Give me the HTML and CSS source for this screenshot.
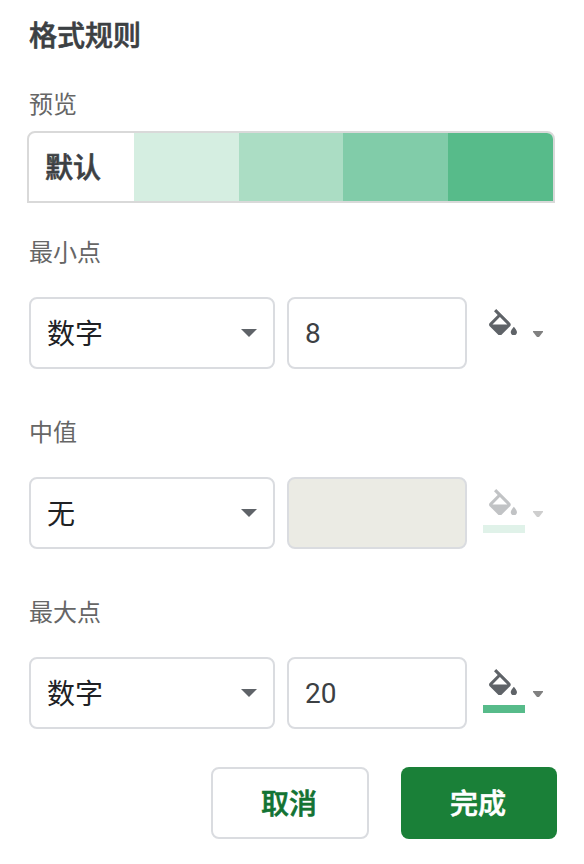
FILE: index.html
```html
<!DOCTYPE html>
<html lang="zh-CN">
<head>
<meta charset="utf-8">
<title>格式规则</title>
<link rel="stylesheet" href="styles.css">
</head>
<body>
<svg class="defs" width="0" height="0" aria-hidden="true">
  <symbol id="fill" viewBox="3 0 18 17"><path d="M16.56 8.94L7.62 0 6.21 1.41l2.38 2.38-5.15 5.15c-.59.59-.59 1.54 0 2.12l5.5 5.5c.29.29.68.44 1.06.44s.77-.15 1.06-.44l5.5-5.5c.59-.58.59-1.53 0-2.12zM5.21 10L10 5.21 14.79 10H5.21zM19 11.5s-2 2.17-2 3.5c0 1.1.9 2 2 2s2-.9 2-2c0-1.33-2-3.5-2-3.5z"/></symbol>
  <symbol id="caret" viewBox="0 0 16 8"><path d="M0 0h16l-8 8z"/></symbol>
  <symbol id="caret-small" viewBox="0 0 10 6"><path d="M0 0h10v1L6 6H4L0 1z"/></symbol>
</svg>
<main class="panel">
  <h1 class="title">格式规则</h1>
  <section>
    <h2 class="label">预览</h2>
    <div class="preview">
      <span class="swatch swatch-name">默认</span>
      <span class="swatch tone-1"></span>
      <span class="swatch tone-2"></span>
      <span class="swatch tone-3"></span>
      <span class="swatch tone-4"></span>
    </div>
  </section>
  <section class="point">
    <h2 class="label">最小点</h2>
    <div class="row">
      <div class="box select"><span class="value">数字</span><svg class="caret"><use href="#caret"/></svg></div>
      <div class="box input">8</div>
      <div class="color">
        <div class="color-icon"><svg class="fill"><use href="#fill"/></svg><span class="bar"></span></div>
        <svg class="caret-small"><use href="#caret-small"/></svg>
      </div>
    </div>
  </section>
  <section class="point">
    <h2 class="label">中值</h2>
    <div class="row">
      <div class="box select"><span class="value">无</span><svg class="caret"><use href="#caret"/></svg></div>
      <div class="box input input-off"></div>
      <div class="color color-off">
        <div class="color-icon"><svg class="fill"><use href="#fill"/></svg><span class="bar bar-light"></span></div>
        <svg class="caret-small"><use href="#caret-small"/></svg>
      </div>
    </div>
  </section>
  <section class="point">
    <h2 class="label">最大点</h2>
    <div class="row">
      <div class="box select"><span class="value">数字</span><svg class="caret"><use href="#caret"/></svg></div>
      <div class="box input">20</div>
      <div class="color">
        <div class="color-icon"><svg class="fill"><use href="#fill"/></svg><span class="bar bar-green"></span></div>
        <svg class="caret-small"><use href="#caret-small"/></svg>
      </div>
    </div>
  </section>
  <div class="actions">
    <button class="button cancel">取消</button>
    <button class="button done">完成</button>
  </div>
</main>
</body>
</html>
```
FILE: styles.css
```css
* { box-sizing: border-box; }
body {
  margin: 0;
  background: #fff;
  color: #3c4043;
  font-family: Roboto, "Noto Sans CJK SC", sans-serif;
  font-size: 28px;
}
.defs { display: block; height: 0; }
svg { display: block; flex: none; }
.panel { padding: 17px 27px 25px 29px; height: 864px; }
.title, .swatch-name, .button {
  font-weight: 500;
  -webkit-text-stroke: 0.6px currentColor;
}
.title { margin: 0 0 28px; font-size: 28px; line-height: 40px; }
.label { margin: 0; font-size: 24px; font-weight: 400; line-height: 40px; color: #666; }
.preview {
  display: flex;
  width: 528px;
  height: 72px;
  margin: 6px 0 0 -2px;
  border: 2px solid #d9d9d9;
  border-radius: 8px 8px 0 0;
  overflow: hidden;
}
.swatch { flex: none; width: 20%; }
.swatch-name { padding: 2px 0 0 16px; line-height: 68px; }
.tone-1 { background: #d5eee1; }
.tone-2 { background: #abddc4; }
.tone-3 { background: #81cca9; }
.tone-4 { background: #57bb8a; }
.point { height: 136px; margin-top: 30px; }
.point + .point { margin-top: 44px; }
.row { display: flex; margin-top: 24px; }
.box {
  display: flex;
  align-items: center;
  height: 72px;
  border: 2px solid #dadce0;
  border-radius: 8px;
  padding: 0 16px;
}
.select { width: 246px; justify-content: space-between; color: #202124; }
.value { padding-bottom: 2px; }
.input { width: 180px; margin-left: 12px; }
.input-off { background: #ebebe4; }
.caret { width: 16px; height: 8px; fill: #5f6368; }
.color { display: flex; margin-left: 16px; padding-top: 12px; }
.color-icon { width: 42px; }
.fill { width: 28px; height: 26.4px; margin-left: 6px; fill: #5f6368; }
.bar { display: block; height: 8px; margin-top: 9.6px; }
.bar-light { background: #57bb8a; opacity: .48; }
.bar-green { background: #57bb8a; }
.caret-small { width: 10px; height: 6px; margin: 22px 0 0 8px; fill: #808080; }
.color-off { opacity: .38; }
.actions { display: flex; justify-content: flex-end; gap: 32px; margin-top: 38px; }
.button {
  height: 72px;
  padding: 0 2px 2px 0;
  border-radius: 8px;
  font-family: inherit;
  font-size: 28px;
}
.cancel { width: 158px; border: 2px solid #dadce0; background: #fff; color: #137333; }
.done { width: 156px; border: 0; background: #1a8038; color: #fff; }
```
